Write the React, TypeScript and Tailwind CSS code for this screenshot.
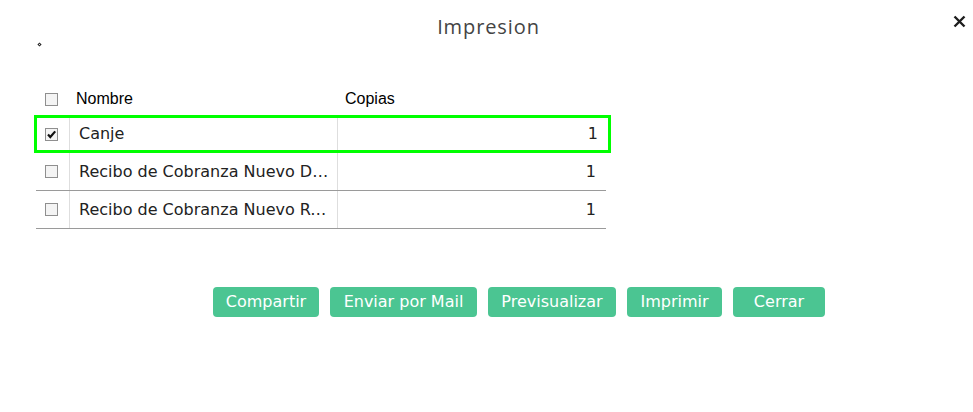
import React from "react";

function Box({ checked }: { checked?: boolean }) {
  return (
    <span className="flex h-[13px] w-[13px] items-center justify-center border border-[#8f8f8f] bg-[#f4f4f4]">
      {checked ? (
        <svg width="11" height="11" viewBox="0 0 11 11">
          <path d="M2 5.6 L4.3 8 L9.2 2.4" fill="none" stroke="#111" strokeWidth="2.2" />
        </svg>
      ) : null}
    </span>
  );
}

const rows = [
  { name: "Canje", copies: 1, selected: true },
  { name: "Recibo de Cobranza Nuevo Diseño", copies: 1, selected: false },
  { name: "Recibo de Cobranza Nuevo Recibo", copies: 1, selected: false },
];

const buttons = [
  { label: "Compartir", w: "w-[106px]" },
  { label: "Enviar por Mail", w: "w-[147px]" },
  { label: "Previsualizar", w: "w-[128px]" },
  { label: "Imprimir", w: "w-[95px]" },
  { label: "Cerrar", w: "w-[92px]" },
];

export default function App() {
  return (
    <div className="relative h-[412px] w-[973px] overflow-hidden bg-white">
      <div className="pt-[13px]">
        <div
          className="h-[28px] pl-[4px] text-center text-[20px] leading-[28px] tracking-[0.9px] text-[#444444]"
          style={{ fontFamily: '"Open Sans", sans-serif' }}
        >
          Impresion
        </div>
      </div>
      <button className="absolute right-[7px] top-[14px] flex h-[14px] w-[14px] items-center justify-center">
        <svg width="13" height="13" viewBox="0 0 13 13">
          <path d="M1.5 1.5 L11.5 11.5 M11.5 1.5 L1.5 11.5" stroke="#1e1e1e" strokeWidth="2.4" />
        </svg>
      </button>
      <div className="mt-[1px] flex h-[4px] pl-[37px]">
        <span className="mt-[0.5px] ml-[1px] h-[3px] w-[3px] rotate-45 border border-[#222]" />
      </div>

      <div className="ml-[36px] mt-[38px] w-[570px]">
        <div
          className="flex h-[31px] items-center pb-[2px] text-[16px] text-black"
          style={{ fontFamily: '"Liberation Sans", Arial, sans-serif' }}
        >
          <div className="flex w-[33px] pl-[9px] pt-[2px]">
            <Box />
          </div>
          <div className="w-[276px] pl-[7px]">Nombre</div>
          <div>Copias</div>
        </div>
        {rows.map((r, i) => (
          <div
            key={i}
            className={
              r.selected
                ? "-ml-[2px] -mr-[5px] flex h-[38px] items-stretch border-[3px] border-[#00ff00]"
                : "flex h-[38px] items-stretch border-b border-[#9a9a9a]"
            }
            style={{ fontFamily: '"DejaVu Sans", Verdana, sans-serif' }}
          >
            <div className={r.selected ? "flex w-[32px] items-center pl-[8px]" : "flex w-[33px] items-center pl-[9px]"}>
              <Box checked={r.selected} />
            </div>
            <div className="flex w-[268px] items-center overflow-hidden border-l border-[#dedede] pl-[9px] pr-[6px] text-[16px] text-[#222]">
              <span className="truncate">{r.name}</span>
            </div>
            <div className="flex flex-1 items-center justify-end border-l border-[#dedede] pr-[10px] text-[16px] text-[#222]">
              {r.copies}
            </div>
          </div>
        ))}
      </div>

      <div className="mt-[58px] flex gap-[11px] pl-[213px]">
        {buttons.map((b) => (
          <button
            key={b.label}
            className={`${b.w} flex h-[30px] items-center justify-center rounded-[4px] bg-[#4bc592] text-[16px] text-white`}
            style={{ fontFamily: '"DejaVu Sans", Verdana, sans-serif' }}
          >
            {b.label}
          </button>
        ))}
      </div>
    </div>
  );
}
